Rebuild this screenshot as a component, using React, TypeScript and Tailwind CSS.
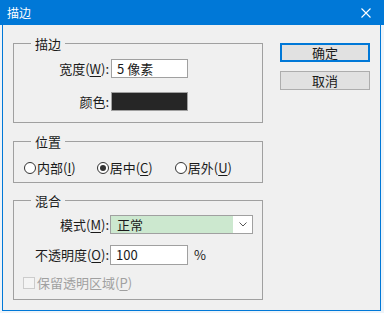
const font = { fontFamily: '"Noto Sans CJK SC", "Microsoft YaHei", sans-serif' };

const U = ({ children }: { children: string }) => <span className="underline underline-offset-2">{children}</span>;

const Radio = ({ checked, label, hot }: { checked?: boolean; label: string; hot: string }) => (
  <div className="flex items-center">
    <span className="w-[12px] h-[12px] rounded-full border border-[#333333] bg-white flex items-center justify-center">
      {checked && <span className="w-[6px] h-[6px] rounded-full bg-[#333333]" />}
    </span>
    <span className="ml-[1px]">
      {label}(<U>{hot}</U>)
    </span>
  </div>
);

const Group = ({ title, className, children }: { title: string; className?: string; children: React.ReactNode }) => (
  <fieldset className={`border border-[#a0a0a0] ${className ?? ""}`}>
    <legend className="ml-[17px] px-[4px] leading-[17px]">{title}</legend>
    {children}
  </fieldset>
);

export default function App() {
  return (
    <div className="w-[384px] h-[313px] bg-[#eef3f8] flex flex-col text-[13px] text-[#1a1a1a]" style={font}>
      <div className="h-[25px] bg-[#0078d7] flex items-center justify-between pl-[7px] pr-[13px] text-white text-[12px]">
        <span>描边</span>
        <svg width="10" height="10" viewBox="0 0 10 10" stroke="white" strokeWidth="1.1">
          <path d="M0.5 0.5 L9.5 9.5 M9.5 0.5 L0.5 9.5" />
        </svg>
      </div>
      <div className="flex-1 ml-[2px] mr-[3px] mb-[2px] border-x border-b border-[#0078d7] bg-[#f0f0f0] flex pl-[10px] pt-[10px]">
        <div className="w-[250px] flex flex-col">
          <Group title="描边" className="pt-[7px] pb-[11px]">
            <div className="flex items-center h-[19px]">
              <span className="w-[95px] text-right">
                宽度(<U>W</U>):
              </span>
              <div className="ml-[2px] w-[77px] h-[19px] bg-white border border-[#a0a0a0] flex items-center pl-[5px]">5 像素</div>
            </div>
            <div className="flex items-center h-[19px] mt-[14px]">
              <span className="w-[95px] text-right">颜色:</span>
              <div className="ml-[2px] w-[77px] h-[19px] bg-[#262626] border border-[#a0a0a0]" />
            </div>
          </Group>
          <Group title="位置" className="mt-[10px] pt-[9px] pb-[6px]">
            <div className="flex items-center h-[17px] pl-[10px]">
              <Radio label="内部" hot="I" />
              <div className="ml-[21px]">
                <Radio checked label="居中" hot="C" />
              </div>
              <div className="ml-[22px]">
                <Radio label="居外" hot="U" />
              </div>
            </div>
          </Group>
          <Group title="混合" className="mt-[9px] pt-[6px] pb-[8px]">
            <div className="flex items-center h-[19px]">
              <span className="w-[95px] text-right">
                模式(<U>M</U>):
              </span>
              <div className="ml-[1px] w-[143px] h-[19px] border border-[#a0a0a0] bg-white flex">
                <div className="flex-1 bg-[#cce8cf] flex items-center pl-[6px]">正常</div>
                <div className="w-[19px] flex items-center justify-center">
                  <svg width="8" height="5" viewBox="0 0 8 5" fill="none" stroke="#555" strokeWidth="1">
                    <path d="M0.5 0.5 L4 4 L7.5 0.5" />
                  </svg>
                </div>
              </div>
            </div>
            <div className="flex items-center h-[20px] mt-[11px]">
              <span className="w-[95px] text-right">
                不透明度(<U>O</U>):
              </span>
              <div className="ml-[1px] w-[78px] h-[20px] bg-white border border-[#a0a0a0] flex items-center pl-[5px]">100</div>
              <span className="ml-[6px]">%</span>
            </div>
            <div className="flex items-center h-[17px] mt-[9px] pl-[9px] text-[#a0a0a0]">
              <span className="w-[12px] h-[12px] border border-[#cccccc] bg-[#f4f4f4]" />
              <span className="ml-[2px]">
                保留透明区域(<U>P</U>)
              </span>
            </div>
          </Group>
        </div>
        <div className="ml-[17px] pt-[8px] flex flex-col">
          <button className="w-[90px] h-[19px] border-2 border-[#0078d7] bg-[#e1e1e1] flex items-center justify-center leading-none">确定</button>
          <button className="mt-[9px] w-[90px] h-[19px] border border-[#adadad] bg-[#e1e1e1] flex items-center justify-center leading-none">取消</button>
        </div>
      </div>
    </div>
  );
}
